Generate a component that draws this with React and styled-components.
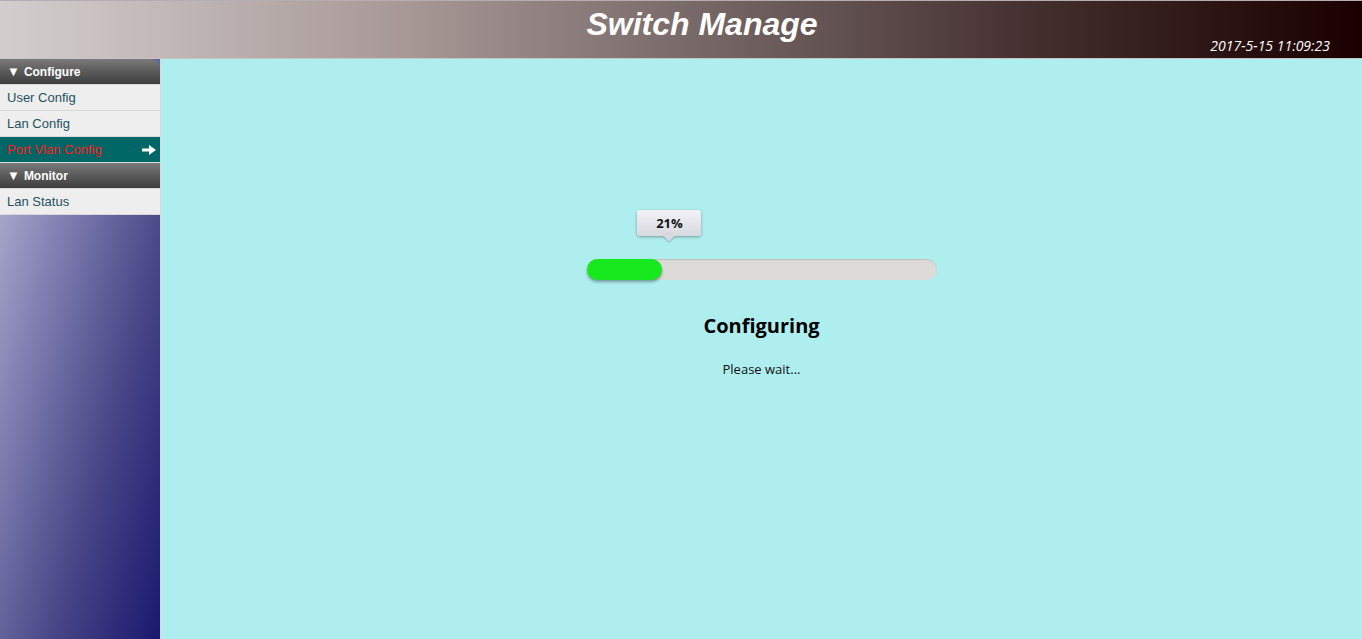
import React from "react";
import styled, { createGlobalStyle } from "styled-components";

const Global = createGlobalStyle`
  html, body { margin: 0; padding: 0; height: 100%; }
  body { font-family: "Liberation Sans", Arial, sans-serif; background: #afeeee; }
  #root { height: 100%; }
`;

const Page = styled.div`
  display: flex;
  flex-direction: column;
  height: 639px;
  overflow: hidden;
`;

const Header = styled.header`
  position: relative;
  height: 57px;
  flex: 0 0 57px;
  border-top: 1px solid #b4aeb4;
  border-bottom: 1px solid #c8c4c4;
  background: linear-gradient(to right, #d2cecd 0%, #a79896 30%, #6e605f 55%, #3c2626 80%, #1a0000 100%);
  display: flex;
  justify-content: center;
`;

const Title = styled.h1`
  margin: 0;
  padding-top: 5px;
  padding-left: 42px;
  font: italic bold 32px "Liberation Sans", Arial, sans-serif;
  color: #fff;
  line-height: 36px;
`;

const Clock = styled.div`
  position: absolute;
  right: 32px;
  bottom: 3px;
  font: italic 14px "Open Sans", "Noto Sans", sans-serif;
  color: #fff;
`;

const Body = styled.div`
  flex: 1;
  display: flex;
`;

const Sidebar = styled.nav`
  width: 161px;
  flex: 0 0 161px;
  border-right: 1px solid #d8d8d8;
  box-sizing: border-box;
  background: linear-gradient(to bottom right, #bebeda 0%, #7e7cb0 35%, #4a4888 65%, #1a186e 100%);
  display: flex;
  flex-direction: column;
`;

const Group = styled.div`
  height: 25px;
  display: flex;
  align-items: center;
  gap: 4px;
  padding-left: 7px;
  background: linear-gradient(to bottom, #7a7a7a 0%, #5a5a5a 50%, #3e3e3e 100%);
  border-top-right-radius: ${(p) => (p.$round ? "9px" : "0")};
  border-bottom: 1px solid #d8d8d8;
  color: #fff;
  font: bold 12px "Liberation Sans", Arial, sans-serif;
`;

const Tri = styled.span`
  font-size: 13px;
  line-height: 1;
`;

const Item = styled.a`
  height: 25px;
  display: flex;
  align-items: center;
  justify-content: space-between;
  padding: 0 4px 0 7px;
  background: ${(p) => (p.$active ? "#006666" : "#eeeeee")};
  border-bottom: 1px solid #d8d8d8;
  color: ${(p) => (p.$active ? "#ff1a1a" : "#1e5260")};
  font: 13px "Liberation Sans", Arial, sans-serif;
  text-decoration: none;
`;

const Main = styled.main`
  flex: 1;
  background: #afeeee;
  display: flex;
  flex-direction: column;
  align-items: center;
  padding-top: 200px;
`;

const Progress = styled.div`
  position: relative;
  width: 350px;
  height: 21px;
  border-radius: 11px;
  background: #dcdbd8;
  box-shadow: inset 0 1px 1px rgba(0, 0, 0, 0.12);
`;

const Fill = styled.div`
  height: 100%;
  border-radius: 11px;
  background: #18e81e;
  box-shadow: 0 2px 3px rgba(0, 0, 0, 0.35);
`;

const Tip = styled.div`
  position: absolute;
  bottom: 44px;
  transform: translateX(-50%);
  width: 64px;
  height: 26px;
  border-radius: 3px;
  background: linear-gradient(to bottom, #f2f2f6, #d8d8e0);
  box-shadow: 0 1px 3px rgba(0, 0, 0, 0.35);
  display: flex;
  align-items: center;
  justify-content: center;
  font: bold 13px "Open Sans", "Noto Sans", sans-serif;
  color: #111;
  &::after {
    content: "";
    position: absolute;
    left: 50%;
    bottom: -4px;
    width: 8px;
    height: 8px;
    margin-left: -4px;
    background: #d8d8e0;
    transform: rotate(45deg);
    box-shadow: 1px 1px 1px rgba(0, 0, 0, 0.2);
    z-index: -1;
  }
`;

const Heading = styled.h2`
  margin: 32px 0 0;
  font: bold 20px "Open Sans", "Noto Sans", sans-serif;
  color: #000;
`;

const Wait = styled.p`
  margin: 21px 0 0;
  font: 13px "Open Sans", "Noto Sans", sans-serif;
  color: #111;
`;

const Arrow = () => (
  <svg width="14" height="10" viewBox="0 0 14 10">
    <path d="M0 3.5h7V0l7 5-7 5V6.5H0z" fill="#fff" />
  </svg>
);

export default function App() {
  const pct = 21;
  return (
    <>
      <Global />
      <Page>
        <Header>
          <Title>Switch Manage</Title>
          <Clock>2017-5-15 11:09:23</Clock>
        </Header>
        <Body>
          <Sidebar>
            <Group $round>
              <Tri>▼</Tri>Configure
            </Group>
            <Item>User Config</Item>
            <Item>Lan Config</Item>
            <Item $active>
              Port Vlan Config
              <Arrow />
            </Item>
            <Group>
              <Tri>▼</Tri>Monitor
            </Group>
            <Item>Lan Status</Item>
          </Sidebar>
          <Main>
            <Progress>
              <Fill style={{ width: `${pct}.7%` }} />
              <Tip style={{ left: `${pct + 2.7}%` }}>{pct}%</Tip>
            </Progress>
            <Heading>Configuring</Heading>
            <Wait>Please wait...</Wait>
          </Main>
        </Body>
      </Page>
    </>
  );
}
